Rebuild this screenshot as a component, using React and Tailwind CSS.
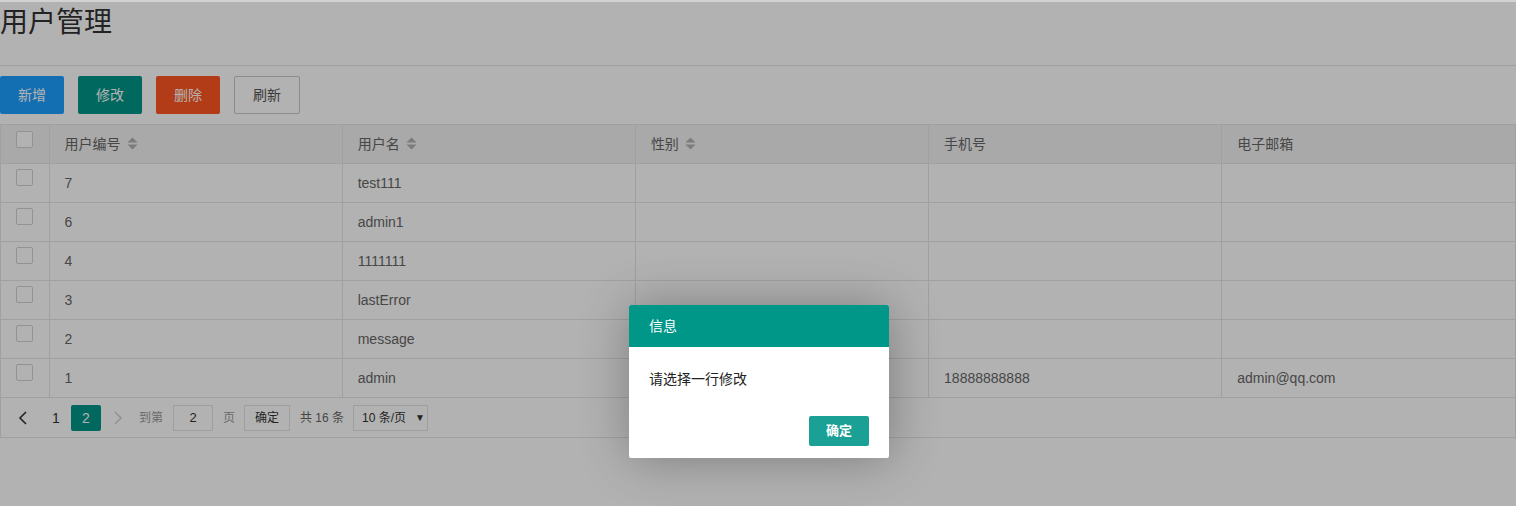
import React from "react";

const users = [
  { id: "7", name: "test111", sex: "", phone: "", email: "" },
  { id: "6", name: "admin1", sex: "", phone: "", email: "" },
  { id: "4", name: "1111111", sex: "", phone: "", email: "" },
  { id: "3", name: "lastError", sex: "", phone: "", email: "" },
  { id: "2", name: "message", sex: "", phone: "", email: "" },
  { id: "1", name: "admin", sex: "", phone: "18888888888", email: "admin@qq.com" },
];

const SortIcon = () => (
  <svg width="11" height="13" viewBox="0 0 11 13" className="ml-[6px] inline-block">
    <path d="M0.5 5.5 L5.5 0.5 L10.5 5.5 Z" fill="#b2b2b2" />
    <path d="M0.5 7.5 L5.5 12.5 L10.5 7.5 Z" fill="#b2b2b2" />
  </svg>
);

const Checkbox = () => (
  <div className="w-[17px] h-[17px] border border-[#d2d2d2] bg-white rounded-[2px] mx-auto" />
);

const App = () => {
  const font = { fontFamily: '"Liberation Sans", "Noto Sans CJK SC", sans-serif' };

  return (
    <div className="relative w-[1516px] h-[506px] bg-white overflow-hidden" style={font}>
      <div className="h-[2px]" />
      {/* title */}
      <div className="h-[64px] border-b border-[#e6e6e6]">
        <h1 className="text-[28px] leading-[42px] text-[#333] font-normal">用户管理</h1>
      </div>

      {/* toolbar */}
      <div className="flex gap-[14px] mt-[10px]">
        <button className="h-[38px] px-[18px] bg-[#1E9FFF] text-white text-sm rounded-[2px]">新增</button>
        <button className="h-[38px] px-[18px] bg-[#009688] text-white text-sm rounded-[2px]">修改</button>
        <button className="h-[38px] px-[18px] bg-[#FF5722] text-white text-sm rounded-[2px]">删除</button>
        <button className="h-[38px] px-[18px] bg-white border border-[#C9C9C9] text-[#555] text-sm rounded-[2px]">刷新</button>
      </div>

      {/* table */}
      <div className="mt-[10px] w-[1516px] border border-[#e6e6e6]">
        <table className="w-full table-fixed border-collapse text-sm text-[#666]">
          <colgroup>
            <col className="w-[48px]" />
            <col />
            <col />
            <col />
            <col />
            <col />
          </colgroup>
          <thead>
            <tr className="bg-[#f2f2f2] h-[38px]">
              <th className="border-r border-[#e6e6e6] align-top pt-[6px]">
                <Checkbox />
              </th>
              <th className="border-r border-[#e6e6e6] px-[15px] text-left font-normal">
                <span className="inline-flex items-center">用户编号<SortIcon /></span>
              </th>
              <th className="border-r border-[#e6e6e6] px-[15px] text-left font-normal">
                <span className="inline-flex items-center">用户名<SortIcon /></span>
              </th>
              <th className="border-r border-[#e6e6e6] px-[15px] text-left font-normal">
                <span className="inline-flex items-center">性别<SortIcon /></span>
              </th>
              <th className="border-r border-[#e6e6e6] px-[15px] text-left font-normal">手机号</th>
              <th className="px-[15px] text-left font-normal">电子邮箱</th>
            </tr>
          </thead>
          <tbody>
            {users.map((u) => (
              <tr key={u.id} className="h-[39px] border-t border-[#e6e6e6]">
                <td className="border-r border-[#e6e6e6] align-top pt-[5px]">
                  <Checkbox />
                </td>
                <td className="border-r border-[#e6e6e6] px-[15px]">{u.id}</td>
                <td className="border-r border-[#e6e6e6] px-[15px]">{u.name}</td>
                <td className="border-r border-[#e6e6e6] px-[15px]">{u.sex}</td>
                <td className="border-r border-[#e6e6e6] px-[15px]">{u.phone}</td>
                <td className="px-[15px]">{u.email}</td>
              </tr>
            ))}
          </tbody>
        </table>

        {/* pagination */}
        <div className="h-[40px] border-t border-[#e6e6e6] flex items-center pl-[7px] text-xs text-[#333]">
          <span className="w-[30px] h-[26px] flex items-center justify-center">
            <svg width="10" height="14" viewBox="0 0 10 14">
              <path d="M8 1 L2 7 L8 13" fill="none" stroke="#333" strokeWidth="1.6" />
            </svg>
          </span>
          <span className="w-[30px] h-[26px] ml-[3px] flex items-center justify-center text-sm">1</span>
          <span className="w-[30px] h-[26px] flex items-center justify-center bg-[#009688] text-white text-sm rounded-[2px]">2</span>
          <span className="w-[30px] h-[26px] ml-[2px] flex items-center justify-center">
            <svg width="10" height="14" viewBox="0 0 10 14">
              <path d="M2 1 L8 7 L2 13" fill="none" stroke="#d2d2d2" strokeWidth="1.6" />
            </svg>
          </span>
          <span className="ml-[6px] text-[#999]">到第</span>
          <span className="ml-[10px] w-[40px] h-[26px] border border-[#e2e2e2] bg-white flex items-center justify-center text-[13px]">2</span>
          <span className="ml-[10px] text-[#999]">页</span>
          <span className="ml-[9px] w-[46px] h-[26px] border border-[#e2e2e2] bg-white flex items-center justify-center">确定</span>
          <span className="ml-[10px] text-[#666]">共 16 条</span>
          <span className="ml-[9px] w-[75px] h-[26px] border border-[#e2e2e2] bg-white flex items-center pl-[8px] gap-[9px]">
            10 条/页
            <span className="text-[10px]">▼</span>
          </span>
        </div>
      </div>

      {/* shade */}
      <div className="absolute left-0 right-0 top-[2px] bottom-0 bg-black/30" />
      <div className="absolute left-0 right-0 top-0 h-[2px] bg-[#d2d2d2]" />

      {/* dialog */}
      <div className="absolute left-[629px] top-[305px] w-[260px] bg-white rounded-[2px] shadow-[1px_1px_50px_rgba(0,0,0,0.3)]">
        <div className="h-[42px] bg-[#009688] text-white text-sm flex items-center pl-[20px] rounded-t-[2px]">信息</div>
        <div className="p-[20px] text-sm leading-[24px] text-[#222]">请选择一行修改</div>
        <div className="flex justify-end pr-[20px] pb-[12px]">
          <button className="h-[30px] w-[60px] bg-[#1AA094] text-white text-[13px] font-bold rounded-[2px] mt-[5px]">确定</button>
        </div>
      </div>
    </div>
  );
};

export default App;
